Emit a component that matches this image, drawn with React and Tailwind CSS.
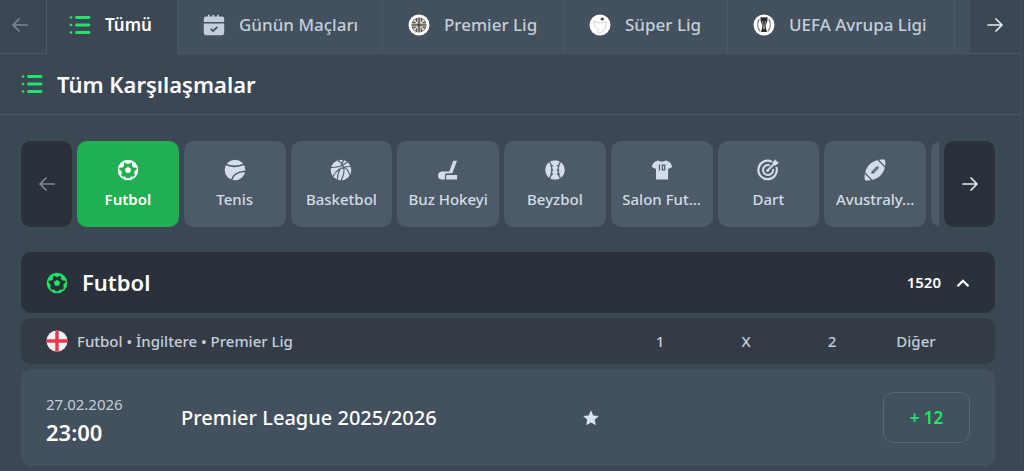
import React, { useState } from 'react';

function ListIcon() {
    return (
        <svg viewBox="0 0 22 22" className="w-[22px] h-[22px] shrink-0" fill="none" stroke="#1fe56a" strokeLinecap="round" aria-hidden="true">
            <path d="M7.500 3.500h12.500M7.500 11h12.500M7.500 18.500h12.500" strokeWidth="2.800" />
            <path d="M1.900 3.500h.2M1.900 11h.2M1.900 18.500h.2" strokeWidth="2.600" />
        </svg>
    );
}

function CalendarIcon() {
    return (
        <svg viewBox="0 0 22 22" className="w-[22px] h-[22px] shrink-0" aria-hidden="true">
            <path d="M3 2.600h2V.8h1.600v1.800h3V.8h1.600v1.800h3V.8h1.600v1.800H19a2.200 2.200 0 0 1 2.200 2.200V8H.8V4.800A2.200 2.200 0 0 1 3 2.600z" fill="currentColor" />
            <path d="M.8 9.400h20.400V18.600a2.600 2.600 0 0 1-2.600 2.600H3.400A2.600 2.600 0 0 1 .8 18.600z" fill="currentColor" />
            <path d="M7.700 14.800l2.400 2.300 4.200-4.200" fill="none" stroke="#43505d" strokeWidth="1.700" />
        </svg>
    );
}

function PremierIcon() {
    return (
        <svg viewBox="0 0 22 22" className="w-[22px] h-[22px] shrink-0" aria-hidden="true">
            <circle cx="11" cy="11" r="10.500" fill="#fff" />
            <circle cx="11" cy="11" r="7.500" fill="#4a443d" />
            <g fill="none" stroke="#f1ede6" strokeWidth=".9">
                <path d="M9.800 3.500v6.300H3.500M12.200 3.500v6.300h6.300M9.800 18.500v-6.300H3.500M12.200 18.500v-6.300h6.300" />
                <path d="M5.600 5.600l3.400 3.400M16.400 5.600L13 9M5.600 16.400L9 13M16.400 16.400L13 13" strokeWidth="1.200" />
                <path d="M7.700 4.300v3.400H4.300M14.300 4.300v3.400h3.400M7.700 17.700v-3.400H4.300M14.300 17.700v-3.400h3.400" strokeWidth=".6" />
            </g>
        </svg>
    );
}

function SuperIcon() {
    return (
        <svg viewBox="0 0 22 22" className="w-[22px] h-[22px] shrink-0" aria-hidden="true">
            <circle cx="11" cy="11" r="10.500" fill="#fff" />
            <circle cx="13.200" cy="5" r="1.600" fill="#3c3f45" />
            <path d="M4.500 7.500c2.500-1 3.500 1.500 6.500 1.500s4-2 6.500-1c-.5 2.500-.8 3.500-1 5-.6 3-3 5.500-7.500 6.500M4.500 7.500c.3 4 1.700 6.500 5 7.500-1 2-.8 3-.5 4.500" fill="none" stroke="#cfc5c0" strokeWidth=".8" />
        </svg>
    );
}

function UefaIcon() {
    return (
        <svg viewBox="0 0 22 22" className="w-[22px] h-[22px] shrink-0" aria-hidden="true">
            <circle cx="11" cy="11" r="10.500" fill="#fff" />
            <path d="M7.600 3.200h6.800c.5 3-.6 5.500-1.600 8.300l.2 3 1 3.500H8l1-3.500.2-3C8.200 8.700 7.100 6.200 7.600 3.200z" fill="#2b2b2d" />
            <path d="M9.500 7l1.100 8M12.500 7l-1.100 8" stroke="#b9b9bc" strokeWidth=".8" />
            <path d="M6.300 5C4 9 4.300 14 7.200 17.300M15.700 5c2.300 4 2 9-.9 12.300" fill="none" stroke="#77777a" strokeWidth="1.200" />
        </svg>
    );
}

function SoccerIcon() {
    return (
        <svg viewBox="0 0 22 22" className="w-[22px] h-[22px] shrink-0" fill="currentColor" aria-hidden="true">
            <path fillRule="evenodd" d="M11 .7a10.300 10.300 0 1 1 0 20.600 10.300 10.300 0 0 1 0-20.600zM7.600 3.500l3.400 1.700 3.400-1.700.7 1.500-.3 2 2 1.500 2.500.2.500 1.400-2.500 2.600.4 3.500-1.300 1.500-2.600-.2-1.400 1.700-2.800 0-1.400-1.700-2.600.2-1.300-1.500.4-3.500L2.200 10.100l.5-1.400 2.500-.2 2-1.500-.3-2z" />
            <path d="M11 7.700l3.200 2.400-1.200 3.700H9l-1.200-3.700z" />
        </svg>
    );
}

function TennisIcon() {
    return (
        <svg viewBox="0 0 22 22" className="w-[22px] h-[22px] shrink-0" aria-hidden="true">
            <circle cx="11" cy="11" r="10.300" fill="currentColor" />
            <path d="M1.500 5.300c5.500 2.700 12 2.700 19 0M7.500 21.500c1-5.500 5.500-8.700 14-9.300" fill="none" stroke="#4d5b69" strokeWidth="1.600" />
        </svg>
    );
}

function BasketballIcon() {
    return (
        <svg viewBox="0 0 22 22" className="w-[22px] h-[22px] shrink-0" aria-hidden="true">
            <circle cx="11" cy="11" r="10.300" fill="currentColor" />
            <path d="M7.300 1c3 1.500 5 4 6 6.500 1.500 4 .5 9-2.300 14M13.700.8C12 3 11.800 5 12.500 7M.8 8.500C8 8.500 14 6 17.500 2.800M3 17.500C6 11 12 7.500 21 7.200M7.500 20.800C7.500 16 9 11 11.500 8.500M13.500 8c3.500 1.500 5.500 4.500 6 8" fill="none" stroke="#4d5b69" strokeWidth="1.100" />
        </svg>
    );
}

function HockeyIcon() {
    return (
        <svg viewBox="0 0 22 22" className="w-[22px] h-[22px] shrink-0" fill="currentColor" aria-hidden="true">
            <path d="M16.300 1.700h3.700l-4.700 12.600H10c-1.400 0-2 .9-2 2.200v4H4.200A3.700 3.700 0 0 1 1 16.800c0-2.500 1.600-4.300 4-4.300h7.300z" />
            <path d="M10.500 16h9.600v4.500h-11V17.400a1.400 1.400 0 0 1 1.400-1.400z" />
        </svg>
    );
}

function BaseballIcon() {
    return (
        <svg viewBox="0 0 22 22" className="w-[22px] h-[22px] shrink-0" aria-hidden="true">
            <circle cx="11" cy="11" r="9.800" fill="currentColor" />
            <g fill="none" stroke="#4d5b69">
                <path d="M5.500 2.500c3.300 5 3.300 12 0 17M16.500 2.500c-3.300 5-3.300 12 0 17" strokeWidth="1.300" />
                <path d="M6.500 7.200l2.600-.6M6.800 11h2.500M6.500 14.800l2.600.6M15.500 7.200l-2.600-.6M15.200 11h-2.500M15.500 14.800l-2.600.6" strokeWidth="1.100" />
            </g>
        </svg>
    );
}

function JerseyIcon() {
    return (
        <svg viewBox="0 0 22 22" className="w-[22px] h-[22px] shrink-0" aria-hidden="true">
            <path d="M7.500 1.500c1.500 1.300 5.500 1.300 7 0 3.500.6 5.500 2 6.800 6.500l-4.200 2v10.500H5v-10.500L.7 8C2 3.500 4 2.100 7.500 1.500z" fill="currentColor" />
            <path d="M8.500 5.500v6M11.400 6.100h2.300v4.800h-2.300z" fill="none" stroke="#4d5b69" strokeWidth="1.200" />
        </svg>
    );
}

function DartIcon() {
    return (
        <svg viewBox="0 0 22 22" className="w-[22px] h-[22px] shrink-0" fill="none" stroke="currentColor" aria-hidden="true">
            <path d="M15 2.900A9.200 9.200 0 1 0 19.300 8" strokeWidth="2.200" />
            <path d="M12.800 6.400A5 5 0 1 0 15.900 10" strokeWidth="2" />
            <path d="M10.500 11.500l7-7" strokeWidth="1.900" />
            <path d="M15.800 3.300L18.600.8l.7 2 2.200.7-2.700 2.700-2.600-.5z" fill="currentColor" strokeWidth=".6" />
            <circle cx="10.600" cy="11.400" r="1.500" fill="currentColor" stroke="none" />
        </svg>
    );
}

function RugbyIcon() {
    return (
        <svg viewBox="0 0 22 22" className="w-[22px] h-[22px] shrink-0" aria-hidden="true">
            <path d="M13 1.200c3-.8 6-.7 8-.4.5 2.500.6 5.500-.2 8C19 15 15 19.300 9 20.800c-3 .7-6 .7-8 .4-.5-2.500-.6-5.500.2-8C3 7 7 2.700 13 1.200z" fill="currentColor" />
            <path d="M13.500.3l8.200 8.200M.3 13.500l8.200 8.200M7.500 14.500l7-7M7.800 11.700l2.500 2.500M9.700 9.800l2.500 2.500M11.600 7.900l2.500 2.500" fill="none" stroke="#4d5b69" strokeWidth="1.300" />
        </svg>
    );
}

function EnglandFlag() {
    return (
        <svg viewBox="0 0 22 22" className="w-[22px] h-[22px] shrink-0" aria-hidden="true">
            <circle cx="11" cy="11" r="10.500" fill="#f3f3f6" />
            <path d="M9.300.6a10.500 10.500 0 0 1 3.400 0v8.700h8.700a10.500 10.500 0 0 1 0 3.400h-8.700v8.700a10.500 10.500 0 0 1-3.400 0v-8.700H.6a10.500 10.500 0 0 1 0-3.400h8.700z" fill="#e8384f" />
        </svg>
    );
}

function Arrow({ left }) {
    return (
        <svg viewBox="0 0 16 16" className="w-4 h-4" fill="none" stroke="currentColor" strokeWidth="1.700" strokeLinecap="round" strokeLinejoin="round" aria-hidden="true">
            {left ? <path d="M15 8H1M7 2L1 8l6 6" /> : <path d="M1 8h14M9 2l6 6-6 6" />}
        </svg>
    );
}

const leagues = [
    { name: 'Tümü', icon: ListIcon, size: 'w-[131px] pl-[22px]' },
    { name: 'Günün Maçları', icon: CalendarIcon, size: 'w-[205px] pl-[25px]' },
    { name: 'Premier Lig', icon: PremierIcon, size: 'w-[181px] pl-[25px]' },
    { name: 'Süper Lig', icon: SuperIcon, size: 'w-[164px] pl-[25px]' },
    { name: 'UEFA Avrupa Ligi', icon: UefaIcon, size: 'w-[227px] pl-[25px]' },
];

const sports = [
    { name: 'Futbol', icon: SoccerIcon },
    { name: 'Tenis', icon: TennisIcon },
    { name: 'Basketbol', icon: BasketballIcon },
    { name: 'Buz Hokeyi', icon: HockeyIcon },
    { name: 'Beyzbol', icon: BaseballIcon },
    { name: 'Salon Fut...', icon: JerseyIcon },
    { name: 'Dart', icon: DartIcon },
    { name: 'Avustraly...', icon: RugbyIcon },
];

function LeagueTabs() {
    const [active, setActive] = useState('Tümü');

    return (
        <nav className="flex h-[54px] bg-[#43505d]">
            <button aria-label="Önceki ligler" className="flex w-[47px] shrink-0 items-center pl-3 pb-1 border-r border-b border-[#4b5865] bg-[#3c4754] text-[#7c8792]">
                <Arrow left />
            </button>
            <div className="flex min-w-0 flex-1 overflow-hidden">
                {leagues.map(({ name, icon: Icon, size }) => (
                    <button
                        key={name}
                        onClick={() => setActive(name)}
                        className={`flex shrink-0 items-center gap-3.5 pb-1 border-r border-b text-[17px] whitespace-nowrap ${size} ${
                            active === name
                                ? 'bg-[#3c4754] border-r-[#4b5865] border-b-[#3c4754] font-semibold text-white'
                                : 'border-[#4b5865] font-medium text-[#c3cedb]'
                        }`}
                    >
                        <Icon />
                        {name}
                    </button>
                ))}
                <div className="flex-1 border-b border-[#4b5865]" />
            </div>
            <button aria-label="Sonraki ligler" className="flex w-[50px] shrink-0 items-center justify-center pb-1 border-b border-[#4b5865] bg-[#3c4754] text-[#e6ebf1]">
                <Arrow />
            </button>
        </nav>
    );
}

function SportPicker() {
    const [active, setActive] = useState('Futbol');

    return (
        <div className="flex h-[86px] gap-[5px]">
            <button aria-label="Önceki sporlar" className="flex w-[51px] shrink-0 items-center justify-center rounded-[10px] bg-[#2a313a] text-[#7c8792]">
                <Arrow left />
            </button>
            <div className="flex min-w-0 flex-1 gap-[5px] overflow-hidden">
                {sports.map(({ name, icon: Icon }) => (
                    <button
                        key={name}
                        onClick={() => setActive(name)}
                        className={`flex w-[calc((100%-48px)/8)] shrink-0 flex-col items-center justify-center gap-2 rounded-[10px] text-[15px] leading-5 whitespace-nowrap ${
                            active === name ? 'bg-[#20b052] font-semibold text-white' : 'bg-[#4d5b69] font-medium text-[#d3dce8]'
                        }`}
                    >
                        <Icon />
                        {name}
                    </button>
                ))}
                <div className="w-[102px] shrink-0 rounded-[10px] bg-[#4d5b69]" />
            </div>
            <button aria-label="Sonraki sporlar" className="flex w-[51px] shrink-0 items-center justify-center rounded-[10px] bg-[#2a313a] text-[#e6ebf1]">
                <Arrow />
            </button>
        </div>
    );
}

function MatchRow({ date, time, title, more }) {
    return (
        <div className="flex h-[97px] items-center rounded-[10px] bg-[#43505d] px-[25px]">
            <div className="w-[135px] pt-1">
                <p className="text-[15px] leading-6 text-[#c3cedb]">{date}</p>
                <p className="text-[22px] leading-8 font-semibold text-white">{time}</p>
            </div>
            <p className="flex-1 text-[20px] font-medium text-white">{title}</p>
            <button aria-label="Favorilere ekle" className="mr-[284px] text-[#dbe3f0]">
                <svg viewBox="0 0 16 16" className="w-4 h-4" fill="currentColor" aria-hidden="true">
                    <path d="M8 .3l2.300 5.100 5.500.6-4.100 3.700 1.200 5.500L8 12.400l-4.900 2.800 1.200-5.500L.2 6l5.500-.6z" />
                </svg>
            </button>
            <button className="h-[51px] w-[87px] rounded-[10px] border border-[#5a6673] text-[17px] font-semibold text-[#1fe56a]">
                + {more}
            </button>
        </div>
    );
}

export default function App() {
    const [open, setOpen] = useState(true);

    return (
        <div className="min-h-screen bg-[#3c4754] font-['Noto_Sans',sans-serif]">
            <div className="mr-[3px] border-r border-[#465360]">
                <LeagueTabs />
                <header className="flex h-[61px] items-center gap-3.5 border-b border-[#4b5865] pl-[21px]">
                    <ListIcon />
                    <h1 className="text-[22px] font-semibold text-white">Tüm Karşılaşmalar</h1>
                </header>

                <main className="pt-[26px] pl-[21px] pr-[25px]">
                    <SportPicker />

                    <section className="mt-[25px] flex flex-col gap-[5px]">
                        <button
                            onClick={() => setOpen(!open)}
                            aria-expanded={open}
                            className="flex h-[61px] items-center rounded-[10px] bg-[#2a313a] px-[25px] text-white"
                        >
                            <span className="text-[#1fe56a]"><SoccerIcon /></span>
                            <span className="ml-3.5 flex-1 text-left text-[22px] font-semibold">Futbol</span>
                            <span className="text-[15px] font-semibold">1520</span>
                            <svg viewBox="0 0 14 10" className={`ml-[15px] h-[10px] w-3.5 ${open ? '' : 'rotate-180'}`} fill="none" stroke="currentColor" strokeWidth="2.300" aria-hidden="true">
                                <path d="M1.500 8.200L7 2.800l5.500 5.400" />
                            </svg>
                        </button>

                        {open && (
                            <>
                                <div className="flex h-[46px] items-center rounded-[10px] bg-[#333b46] px-[25px] text-[15px] font-medium text-[#c3cedb]">
                                    <EnglandFlag />
                                    <span className="ml-[9px] flex-1">Futbol • İngiltere • Premier Lig</span>
                                    <span className="w-[86px] text-center">1</span>
                                    <span className="w-[86px] text-center">X</span>
                                    <span className="w-[86px] text-center">2</span>
                                    <span className="mr-[13px] w-[82px] text-center">Diğer</span>
                                </div>
                                <MatchRow date="27.02.2026" time="23:00" title="Premier League 2025/2026" more={12} />
                            </>
                        )}
                    </section>
                </main>
            </div>
        </div>
    );
}
